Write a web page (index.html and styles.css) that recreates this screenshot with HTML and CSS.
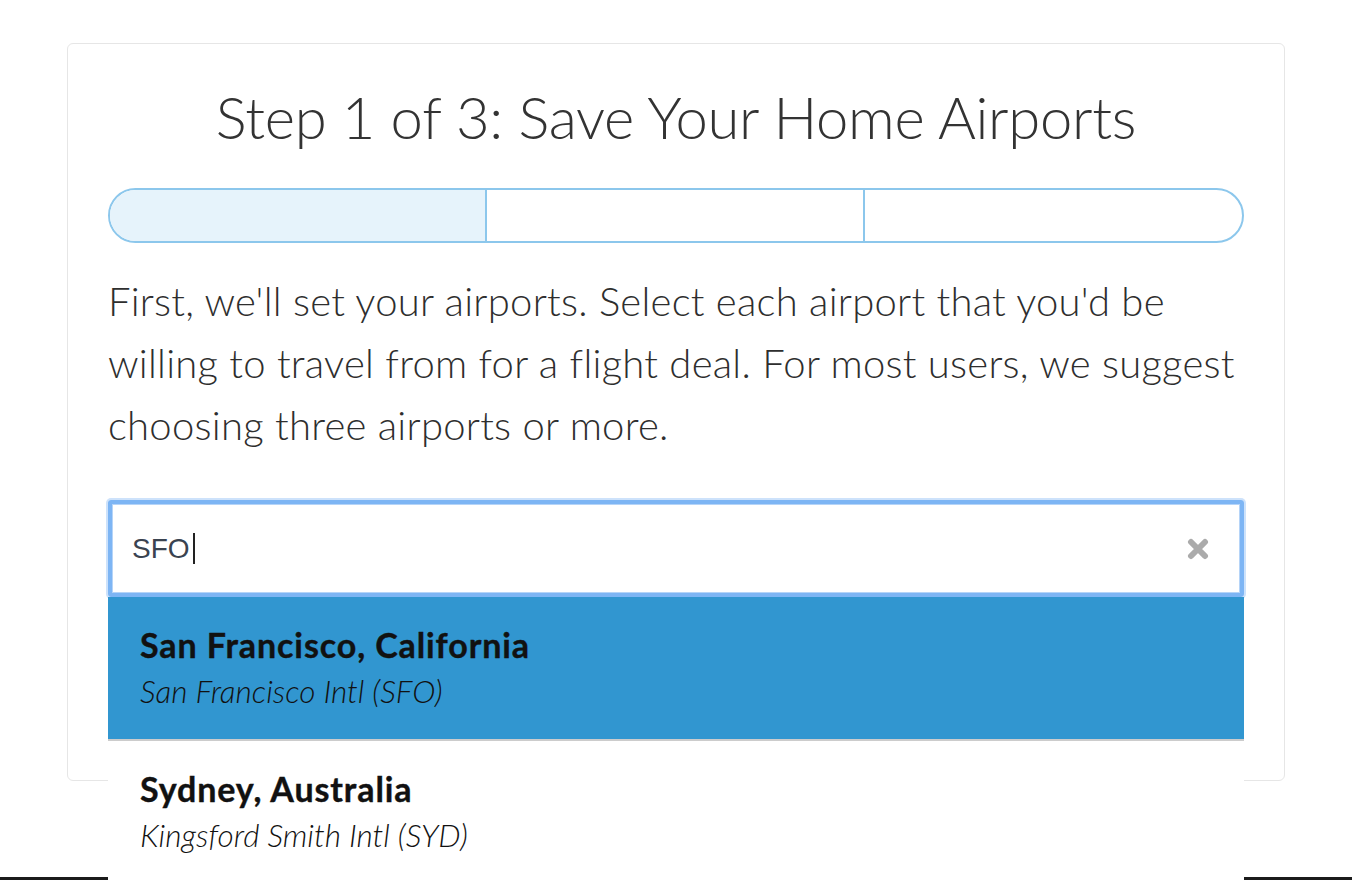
FILE: index.html
```html
<!DOCTYPE html>
<html lang="en">
<head>
    <meta charset="UTF-8">
    <title>Home Airports</title>
    <link rel="stylesheet" href="styles.css">
</head>
<body>
<div class="wizard">
    <h1>Step 1 of 3: Save Your Home Airports</h1>
    <!-- progress -->
    <div class="progress">
        <div class="step done"></div>
        <div class="step"></div>
        <div class="step"></div>
    </div>
    <p class="intro">First, we'll set your airports. Select each airport that you'd be willing to travel from for a flight deal. For most users, we suggest choosing three airports or more.</p>
    <!-- search box -->
    <div class="search">
        <div class="field">
            <span class="query">SFO</span><span class="caret"></span>
            <svg class="clear" width="22" height="22" viewBox="0 0 22 22">
                <path d="M4 4 L18 18 M18 4 L4 18" stroke="#ababab" stroke-width="6" stroke-linecap="round" fill="none"/>
            </svg>
        </div>
        <!-- results -->
        <ul class="results">
            <li class="active">
                <strong>San Francisco, California</strong>
                <em>San Francisco Intl (SFO)</em>
            </li>
            <li>
                <strong>Sydney, Australia</strong>
                <em>Kingsford Smith Intl (SYD)</em>
            </li>
        </ul>
    </div>
</div>
<div class="footer"></div>
</body>
</html>
```

FILE: styles.css
```css
body {
    margin: 0;
    padding: 0;
    background-color: #FFF;
    font-family: Lato, "Open Sans", sans-serif;
    color: #333;
}
.wizard {
    width: 1136px;
    margin: 43px auto 0;
    padding: 37px 40px 183px;
    border: 1px solid #E6E6E6;
    border-radius: 6px;
}
.wizard h1 {
    margin: 0;
    font-size: 58px;
    font-weight: 300;
    line-height: 72px;
    letter-spacing: -0.3px;
    text-align: center;
}
.progress {
    display: grid;
    grid-template-columns: 1fr 1fr 1fr;
    height: 55px;
    margin-top: 35px;
    box-sizing: border-box;
    border: 2px solid #8CC7EC;
    border-radius: 28px;
    overflow: hidden;
}
.progress .step {
    border-right: 2px solid #8CC7EC;
}
.progress .step:last-child {
    border-right: none;
}
.progress .done {
    background-color: #E6F3FB;
}
.intro {
    margin: 27px 0 0;
    font-size: 40px;
    font-weight: 300;
    line-height: 62px;
    letter-spacing: 0.25px;
    color: #2E2E2E;
}
.search {
    position: relative;
    margin-top: 44px;
}
.field {
    display: flex;
    align-items: center;
    height: 97px;
    padding: 0 31px 0 20px;
    box-sizing: border-box;
    border: 4px solid #7DB5F4;
    border-radius: 3px;
    box-shadow: 0 0 0 2px #CDE2FB, inset 0 0 0 1px #B5D4F8;
}
.query {
    font-family: "Liberation Sans", Arial, sans-serif;
    font-size: 28px;
    color: #3A4350;
}
.caret {
    width: 2px;
    height: 31px;
    margin-left: 3px;
    background-color: #222;
}
.clear {
    margin-left: auto;
}
.results {
    position: absolute;
    top: 100%;
    left: 0;
    right: 0;
    margin: 0;
    padding: 0;
    list-style: none;
    background-color: #FFF;
}
.results li {
    padding: 25px 32px 24px;
    color: #111;
    border-bottom: 2px solid #CCC;
}
.results li.active {
    background-color: #3196D0;
}
.results strong,
.results em {
    display: block;
}
.results strong {
    font-size: 34px;
    font-weight: 700;
    line-height: 46px;
    letter-spacing: 0.9px;
    -webkit-text-stroke: 0.4px #111;
}
.results em {
    font-size: 31.5px;
    font-weight: 300;
    line-height: 47px;
}
.footer {
    height: 60px;
    margin-top: 96px;
    background-color: #1B1B1B;
}
```
